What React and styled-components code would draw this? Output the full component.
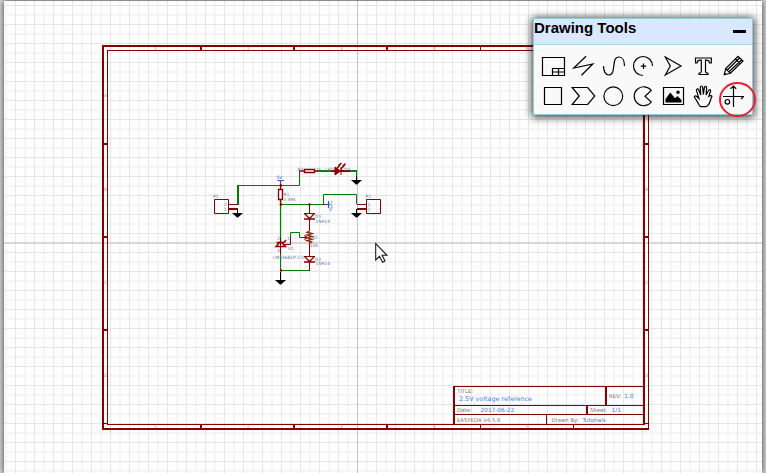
import React from "react";
import styled, { createGlobalStyle } from "styled-components";

const maroon = "#880000";
const green = "#008000";
const blue = "#2a5cc8";

const GlobalStyle = createGlobalStyle`
  html, body { margin: 0; overflow: hidden; }
  body { background: #d2d2d2; }
  *, *::before, *::after { box-sizing: border-box; }
`;

const Workspace = styled.main`
  position: relative;
  width: 766px;
  height: 473px;
  padding: 1px 4px 0;
  overflow: hidden;
  font-family: "Liberation Sans", Arial, sans-serif;
`;

const Canvas = styled.section`
  height: 472px;
  padding: 44px 0 0 98px;
  box-shadow: 0 0 6px rgba(0, 0, 0, 0.75);
  background-color: #fefefe;
  background-image:
    linear-gradient(#d6d6d6, #d6d6d6),
    linear-gradient(#c4c4c4, #c4c4c4),
    linear-gradient(90deg, #e6e6e6 1px, transparent 1px),
    linear-gradient(#e6e6e6 1px, transparent 1px),
    linear-gradient(90deg, #f5f5f5 2px, transparent 2px),
    linear-gradient(#f5f5f5 2px, transparent 2px);
  background-repeat: no-repeat, no-repeat, repeat, repeat, repeat, repeat;
  background-size: 100% 2px, 1px 100%, 19px 19px, 19px 19px, 19px 19px, 19px 19px;
  background-position: 0 241px, 353px 0, 11px 0, 0 4px, 20px 0, 0 13px;
`;

const Sheet = styled.div`
  position: relative;
  width: 547px;
  height: 385px;
  padding: 3px;
  border: 2px solid ${maroon};
  border-right-width: 1px;
`;

const SheetInner = styled.div`
  display: flex;
  align-items: flex-end;
  justify-content: flex-end;
  width: 538px;
  height: 375px;
  border: 1px solid ${maroon};
  border-right-width: 2px;
`;

const TitleBlock = styled.div`
  display: flex;
  flex-direction: column;
  width: 190px;
  height: 38px;
  border-left: 2px solid ${maroon};
  border-top: 1px solid ${maroon};
  font: 5.6px/8px "DejaVu Sans", Verdana, sans-serif;
`;

const TitleRow = styled.div`
  display: flex;
  height: ${(p) => p.$height}px;
  border-bottom: ${(p) => (p.$last ? 0 : 1)}px solid ${maroon};
`;

const TitleCell = styled.div`
  display: flex;
  flex-direction: ${(p) => (p.$stack ? "column" : "row")};
  align-items: ${(p) => (p.$stack ? "flex-start" : "center")};
  width: ${(p) => p.$width}px;
  padding-left: ${(p) => p.$inset ?? 2}px;
  white-space: nowrap;
  border-left: ${(p) => p.$rule || 0}px solid ${maroon};
`;

const Label = styled.span`
  flex: none;
  width: ${(p) => (p.$width ? `${p.$width}px` : "auto")};
  font-size: 5.3px;
  color: #7c776c;
`;

const Value = styled.span`
  padding-left: ${(p) => p.$indent || 0}px;
  font-size: ${(p) => p.$size || 6}px;
  color: #3f80e4;
`;

const Drawing = styled.svg`
  position: absolute;
  inset: 0;
  pointer-events: none;
`;

const Mark = styled.text`
  font: 4.4px "DejaVu Sans", sans-serif;
  fill: ${(p) => p.$color || "#66739c"};
`;

const Panel = styled.aside`
  position: absolute;
  left: 533px;
  top: 18px;
  width: 220px;
  height: 97px;
  border: 1px solid #8ecbdc;
  background: #f9f9f9;
  box-shadow: 0 1px 8px 1px rgba(0, 0, 0, 0.8);
`;

const PanelHeader = styled.header`
  display: flex;
  justify-content: space-between;
  height: 26px;
  padding-right: 6px;
  background: #d9e8ff;
  border-bottom: 1px solid #a5d4e3;
`;

const PanelTitle = styled.h1`
  margin: 0;
  font-size: 15px;
  font-weight: 700;
  line-height: 18px;
  color: #000;
`;

const Minimize = styled.button`
  align-self: flex-start;
  width: 13px;
  height: 3px;
  margin-top: 11px;
  padding: 0;
  border: 0;
  background: #000;
`;

const ToolGrid = styled.div`
  display: grid;
  grid-template-columns: repeat(7, 30px);
  grid-auto-rows: 30px;
  padding: 6px 0 0 4px;
`;

const Tool = styled.button`
  display: block;
  padding: 0;
  border: 0;
  background: none;
  svg {
    display: block;
    fill: none;
    stroke: #000;
    stroke-width: 1.2;
  }
`;

const Highlight = styled.span`
  position: absolute;
  left: 185px;
  top: 63px;
  width: 37px;
  height: 35px;
  border: 2px solid #e8202c;
  border-radius: 50%;
`;

const tools = [
  ["Sheet", <g key="i"><path d="M4.5 6.5H26.5V24.5H4.5Z" /><path d="M14.5 24V17.5H26M14.5 21H26M20.5 17.5V24" /></g>],
  ["Wire", <path key="i" d="M18 5.2 5.8 17 24.8 13 13.5 24.2" />],
  ["Curve", <path key="i" d="M5.5 15C5.5 20 7.5 24 10.7 24 19 24 12.5 6 21 6 24.5 6 26.5 10 26.5 15" />],
  ["Arc", <g key="i"><path d="M24.5 15A9.5 9.5 0 1 0 15 24.5" /><path d="M15.5 12.5V18M12.8 15.2H18.2" /></g>],
  ["Arrow", <path key="i" d="M7.3 6 23 15 7.3 24 12.3 15Z" />],
  ["Text", <path key="i" d="M7.5 7H23.3V12H21.5Q21 9.2 18.5 9.2H17.5V20.5Q17.5 22 20 22.3V23.5H11V22.3Q13.3 22 13.3 20.5V9.2H12Q9.5 9.2 9 12H7.5Z" />],
  ["Pencil", <path key="i" d="M6.2 23.8 7.7 17.5 20 5.4 25 10 12.4 22.3Z M7.7 17.5 12.4 22.3M17.5 8 22.3 12.7M9.3 19 21.5 7M11 20.8 23.7 8.8M6.5 22.2 8 23.5" />],
  ["Rectangle", <path key="i" d="M6.5 6.5H23.5V23.5H6.5Z" />],
  ["Polygon", <path key="i" d="M4.2 6.5H19.7L26.8 15 19.7 23.5H4.2L11.3 15Z" />],
  ["Ellipse", <circle key="i" cx="15.3" cy="15.3" r="9.4" />],
  ["Pie", <path key="i" d="M23.3 9.5A9.5 9.5 0 1 0 23.3 21L17 15.2Z" />],
  ["Image", <g key="i"><path d="M5.5 6.5H25.5V23.5H5.5Z" /><path d="M7.5 21.5V18L12.3 11.5 17 17.3 19.4 15 23.5 19V21.5Z" fill="#000" stroke="none" /><circle cx="20" cy="11.2" r="1.7" fill="#000" stroke="none" /></g>],
  ["Drag", <path key="i" d="M11 23.8C8.8 19.6 8 18.2 6.6 16.6 5.8 15.2 7.6 14.4 8.8 15.5L11 17.5 8.5 9.7C8 7.8 10 7.2 10.7 9L12.8 14 12.2 6.8C12.2 4.5 14.4 4.4 14.6 6.5L15.4 13.4 16.3 6.7C16.7 4.8 18.7 5.1 18.6 7L18.1 14 20.6 9.5C21.6 7.8 23.1 8.8 22.5 10.5L20.8 15.2C23 14 24.8 14.8 23.5 16.2 22.4 18.5 22.4 22.2 19.5 24.8L18 25.7H12.5Z" />],
  ["Origin", <g key="i"><path d="M5 15.5H26M23 18 25.7 15.3M15.5 4.8V26M12.5 7.8 15.5 5 18.2 7.8" /><circle cx="9.4" cy="20.8" r="2.3" /></g>],
];

function Ground({ x, y }) {
  return (
    <path
      d={`M${x - 5} ${y}H${x + 6}L${x + 1} ${y + 4.5}H${x}Z M${x} ${y - 4}H${x + 1}V${y}H${x}Z`}
      fill="#000"
    />
  );
}

function FrameMarks() {
  const columns = [156, 249, 342, 435, 528];
  const rows = [97, 191, 284, 377];
  return (
    <Drawing width="766" height="473">
      <g stroke={maroon} strokeWidth="2">
        {[201, 294, 387].map((x) => (
          <path key={x} d={`M${x} 46V51M${x} 424V429`} />
        ))}
        {[144, 237, 330].map((y) => (
          <path key={y} d={`M103 ${y}H108M644 ${y}H649`} />
        ))}
        <path
          strokeWidth="1"
          d="M103 423.5H108M644 423.5H649M480.5 46V51M480.5 424V429M573.5 424V429"
        />
      </g>
      {columns.map((x, i) => (
        <g key={x}>
          <Mark $color="#a39a92" x={x - 2} y="50">{i + 1}</Mark>
          <Mark $color="#a39a92" x={x - 2} y="428">{i + 1}</Mark>
        </g>
      ))}
      {rows.map((y, i) => (
        <g key={y}>
          <Mark $color="#a39a92" x="104" y={y}>{"ABCD"[i]}</Mark>
          <Mark $color="#a39a92" x="645" y={y}>{"ABCD"[i]}</Mark>
        </g>
      ))}
    </Drawing>
  );
}

function Circuit() {
  return (
    <Drawing width="766" height="473" fill="none">
      <g stroke={green}>
        <path d="M238 205V185" strokeWidth="2" />
        <path d="M237 185.5H299.5V171M281 204.5H323.5V194.5H356.5V204M280.5 204V240M280.5 252V271M281 270.5H309.5M290.5 237V232.5H299.5V237.5H302" />
        <path d="M280.5 205V240" strokeWidth="1.2" />
        <path d="M317 171H333M347 171H357" strokeWidth="2" />
        <path d="M356.5 171V177" />
      </g>
      <g stroke={maroon}>
        <path d="M214.5 199.5H228.5V213.5H214.5ZM366.5 199.5H380.5V213.5H366.5ZM229 204.5H238M357 204.5H366" />
        <path d="M229 209H238M357 209H366" strokeWidth="2" />
        <path d="M280.5 184V190M280.5 199V205M278.5 189.5H282.5V199.5H278.5Z" strokeWidth="1.3" />
        <path d="M299 171H304M315 171H318M304.5 169.5H314.5V172.5H304.5Z" strokeWidth="1.4" />
        <path d="M331 171H350" strokeWidth="2" />
        <path d="M335 167 340.5 171 335 175ZM341 167V175" fill={maroon} />
        <path d="M337 168.5 340.5 164M340.5 169.5 345 164.5M338.5 165.5 341.5 163M342.5 166.5 345.5 163.5" strokeWidth="1.4" />
        <path d="M309.5 204V213M304 213.5H315M309.5 219V231M309.5 243V256M304 256.5H315M309.5 262V271M323 204.5H327" />
        <path d="M304.5 213.5 309.5 218.5 314.5 213.5M304 219H315M304.5 256.5 309.5 261.5 314.5 256.5M304 262H315" strokeWidth="1.3" />
        <path d="M302 237.5H307M304.5 235.5 307 237.5 304.5 239.5" strokeWidth="1.2" />
        <path d="M290.5 237V244.5H284M280.5 238V254" />
        <path d="M276 246.5 280.5 241.5 285.5 246.5ZM276.5 242.5H284L286 240" strokeWidth="1.5" />
      </g>
      <path
        d="M309.5 231 307 232.3 312 233.6 307 235 312 236.4 307 237.8 312 239.2 307 240.6 311.5 242 309.5 243"
        stroke="#8f2d0b"
        strokeWidth="1.4"
      />
      <g fill={maroon}>
        <circle cx="309.5" cy="204.5" r="1.2" />
        <circle cx="281" cy="204.5" r="1.2" />
        <circle cx="281" cy="185.5" r="1.2" />
        <circle cx="281" cy="270.5" r="1.2" />
      </g>
      <path d="M277.5 180.5H284M280.5 181V184M328.5 201V208M326.5 204.5H330" stroke={blue} strokeWidth="1.2" />
      <path d="M280.5 272V277" stroke="#000" />
      <Ground x={237} y={213} />
      <Ground x={356} y={180} />
      <Ground x={356} y={213} />
      <Ground x={280} y={280} />
      <Mark x="213" y="198">P1</Mark>
      <Mark x="365.5" y="198">P2</Mark>
      <Mark x="276.5" y="179" $color={blue}>5V</Mark>
      <Mark x="283.5" y="196">R1</Mark>
      <Mark x="283.5" y="201">2.49k</Mark>
      <Mark x="297.5" y="170.5">R3</Mark>
      <Mark x="315.5" y="170.5">1k</Mark>
      <Mark x="325.5" y="170.5">LED</Mark>
      <Mark x="344" y="170.5">D3</Mark>
      <Mark x="330" y="203.5" $color={blue}>2</Mark>
      <Mark x="330" y="207.5" $color={blue}>5</Mark>
      <Mark x="329" y="211" $color={blue}>V</Mark>
      <Mark x="315" y="218">D1</Mark>
      <Mark x="315.5" y="222.5">1N914</Mark>
      <Mark x="312" y="239">R2</Mark>
      <Mark x="310" y="246.5">10k</Mark>
      <Mark x="315" y="260.5">D2</Mark>
      <Mark x="315.5" y="265">1N914</Mark>
      <Mark x="288" y="250">U1</Mark>
      <Mark x="273" y="259">LM336BLP 2.5</Mark>
      <Mark x="224" y="206">2</Mark>
      <Mark x="224" y="210.5">1</Mark>
      <Mark x="367.5" y="206">1</Mark>
      <Mark x="367.5" y="210.5">2</Mark>
      <Mark x="277" y="239.5">2</Mark>
      <Mark x="277" y="252">3</Mark>
      <Mark x="287" y="239.5">1</Mark>
      <path d="M375.7 243.5V260L379.5 256.4 382.6 262.2 385 261 382.1 255.3H387Z" fill="#fff" stroke="#181820" strokeWidth="1.1" />
    </Drawing>
  );
}

export default function App() {
  return (
    <Workspace>
      <GlobalStyle />
      <Canvas>
        <Sheet>
          <SheetInner>
            <TitleBlock>
              <TitleRow $height={19}>
                <TitleCell $width={150} $stack>
                  <Label>TITLE:</Label>
                  <Value $indent={2} $size={6.4}>2.5V voltage reference</Value>
                </TitleCell>
                <TitleCell $width={38} $rule={2}>
                  <Label $width={15}>REV:</Label>
                  <Value>1.0</Value>
                </TitleCell>
              </TitleRow>
              <TitleRow $height={9}>
                <TitleCell $width={131}>
                  <Label $width={23.5}>Date:</Label>
                  <Value $size={5.8}>2017-06-22</Value>
                </TitleCell>
                <TitleCell $width={57} $rule={2}>
                  <Label $width={21.5}>Sheet:</Label>
                  <Value>1/1</Value>
                </TitleCell>
              </TitleRow>
              <TitleRow $height={9} $last>
                <TitleCell $width={91}>
                  <Label>EASYEDA V4.5.6</Label>
                </TitleCell>
                <TitleCell $width={97} $rule={1} $inset={4.5}>
                  <Label $width={31}>Drawn By:</Label>
                  <Value $size={5.5}>Tutorials</Value>
                </TitleCell>
              </TitleRow>
            </TitleBlock>
          </SheetInner>
        </Sheet>
      </Canvas>
      <FrameMarks />
      <Circuit />
      <Panel>
        <PanelHeader>
          <PanelTitle>Drawing Tools</PanelTitle>
          <Minimize aria-label="Minimize" />
        </PanelHeader>
        <ToolGrid>
          {tools.map(([name, icon]) => (
            <Tool key={name} aria-label={name}>
              <svg width="30" height="30" viewBox="0 0 30 30">{icon}</svg>
            </Tool>
          ))}
        </ToolGrid>
        <Highlight />
      </Panel>
    </Workspace>
  );
}
